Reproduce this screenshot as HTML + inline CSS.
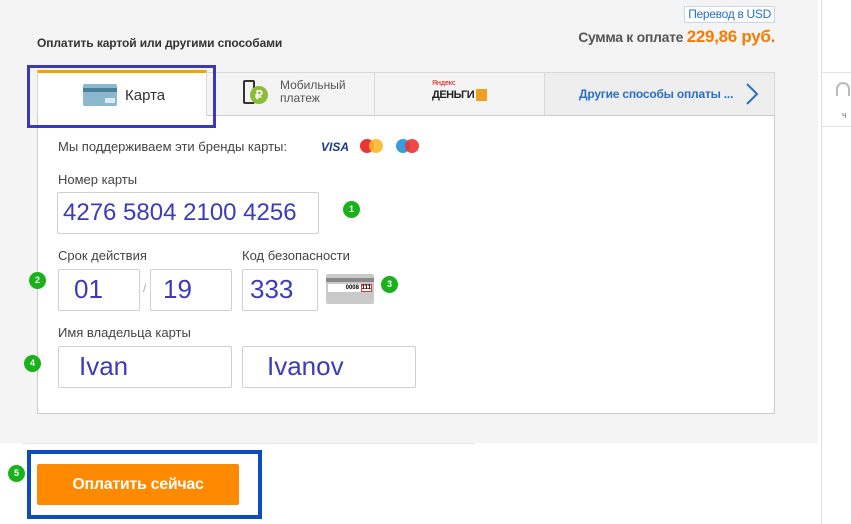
<!DOCTYPE html>
<html><head><meta charset="utf-8"><style>
*{margin:0;padding:0;box-sizing:border-box}
body{width:851px;height:524px;position:relative;background:#fff;font-family:"Liberation Sans",Arial,sans-serif;overflow:hidden}
.a{position:absolute}
.panel{left:0;top:0;width:818px;height:443px;background:#f4f4f4}
.inp{position:absolute;background:#fff;border:1px solid #d0d0d0;border-radius:2px;color:#3c3cb8;font-size:26px;line-height:39px;white-space:nowrap}
.lbl{position:absolute;font-size:13px;color:#444}
.b{position:absolute;width:17px;height:17px;border-radius:50%;background:#19b21b;color:#fff;font-size:9px;font-weight:bold;text-align:center;line-height:17px}
.tab{position:absolute;top:72px;height:43px;border-top:1px solid #d8d8d8;border-right:1px solid #d8d8d8;background:#f4f4f4}
</style></head><body>
<div class="a panel"></div>
<div class="a" style="left:821px;top:0;width:1px;height:524px;background:#e2e2e2"></div>
<div class="a" style="left:822px;top:72px;width:29px;height:1px;background:#e2e2e2"></div>
<div class="a" style="left:822px;top:126px;width:29px;height:1px;background:#e2e2e2"></div>
<div class="a" style="left:836px;top:82px;width:14px;height:14px;border:2px solid #bbb;border-bottom:none;border-radius:8px 8px 0 0"></div>
<div class="a" style="left:842px;top:110px;font-size:9px;color:#777">ч</div>

<div class="a" style="right:76px;top:6px;border:1px solid #c8d8ea;background:#fff;color:#2a6fc1;font-size:12px;padding:0 3px;line-height:15px;letter-spacing:-0.3px">Перевод в USD</div>
<div class="a" style="left:37px;top:36px;font-size:12px;font-weight:bold;color:#333;letter-spacing:-0.1px">Оплатить картой или другими способами</div>
<div class="a" style="right:76px;top:27px;font-size:14px;font-weight:bold;color:#555;letter-spacing:-0.3px">Сумма к оплате <span style="color:#f57c00;font-size:17px">229,86 руб.</span></div>

<div class="a" style="left:37px;top:115px;width:738px;height:299px;background:#fff;border:1px solid #ccc"></div>
<div class="tab" style="left:207px;width:168px"></div>
<div class="tab" style="left:375px;width:170px"></div>
<div class="tab" style="left:545px;width:230px;background:#eeeeee"></div>
<div class="a" style="left:37px;top:70px;width:170px;height:46px;background:#fff;border-top:3px solid #f5a300;border-left:1px solid #d8d8d8;border-right:1px solid #d8d8d8"></div>
<div class="a" style="left:83px;top:84px;width:34px;height:22px;background:#8ab9cf;border-radius:2px"></div>
<div class="a" style="left:83px;top:88px;width:34px;height:4px;background:#4b7f98"></div>
<div class="a" style="left:105px;top:98px;width:10px;height:5px;background:#d9eaf2"></div>
<div class="a" style="left:125px;top:87px;font-size:15px;color:#333">Карта</div>
<div class="a" style="left:243px;top:80px;width:12px;height:24px;border:2px solid #333;border-radius:2px"></div>
<div class="a" style="left:250px;top:86px;width:18px;height:18px;border-radius:50%;background:#8dbb3a;color:#fff;font-size:12px;font-weight:bold;text-align:center;line-height:18px">₽</div>
<div class="a" style="left:280px;top:79px;font-size:12px;color:#555;line-height:13px">Мобильный<br>платеж</div>
<div class="a" style="left:432px;top:80px;font-size:7px;color:#d00">Яндекс</div>
<div class="a" style="left:432px;top:89px;font-size:11px;font-weight:bold;color:#222;letter-spacing:-0.5px">ДЕНЬГИ</div>
<div class="a" style="left:476px;top:89px;width:11px;height:12px;background:#f0a020"></div>
<div class="a" style="left:579px;top:87px;font-size:12px;font-weight:bold;color:#2a6fc1;letter-spacing:-0.2px">Другие способы оплаты ...</div>
<svg class="a" style="left:744px;top:82px" width="16" height="24"><path d="M3 2 L13 12 L3 22" stroke="#2a6fc1" stroke-width="2" fill="none"/></svg>
<div class="a" style="left:27px;top:65px;width:189px;height:63px;border:3px solid #3a3ab8"></div>

<div class="lbl" style="left:58px;top:139px">Мы поддерживаем эти бренды карты:</div>
<div class="a" style="left:321px;top:140px;font-size:12px;font-weight:bold;font-style:italic;color:#1a3b8a">VISA</div>
<div class="a" style="left:360px;top:139px;width:14px;height:14px;border-radius:50%;background:#e33"></div>
<div class="a" style="left:369px;top:139px;width:14px;height:14px;border-radius:50%;background:#f8b82a;opacity:.9"></div>
<div class="a" style="left:396px;top:139px;width:14px;height:14px;border-radius:50%;background:#3a9be0"></div>
<div class="a" style="left:405px;top:139px;width:14px;height:14px;border-radius:50%;background:#e33;opacity:.9"></div>

<div class="lbl" style="left:58px;top:172px">Номер карты</div>
<div class="inp" style="left:57px;top:192px;width:262px;height:42px;padding-left:5px;font-size:24px">4276 5804 2100 4256</div>
<div class="b" style="left:343px;top:201px">1</div>

<div class="lbl" style="left:58px;top:248px">Срок действия</div>
<div class="lbl" style="left:242px;top:248px">Код безопасности</div>
<div class="inp" style="left:58px;top:269px;width:82px;height:42px;padding-left:15px">01</div>
<div class="a" style="left:143px;top:283px;font-size:11px;color:#aaa">/</div>
<div class="inp" style="left:150px;top:269px;width:82px;height:42px;padding-left:12px">19</div>
<div class="inp" style="left:242px;top:269px;width:76px;height:42px;padding-left:7px">333</div>
<div class="a" style="left:326px;top:274px;width:48px;height:30px;background:#c9c9c9;border-radius:2px"></div>
<div class="a" style="left:326px;top:278px;width:48px;height:4px;background:#888"></div>
<div class="a" style="left:328px;top:284px;width:44px;height:8px;background:#fff;font-size:6px;text-align:right;line-height:8px;color:#000;font-weight:bold">0008 <span style="border:1px solid #d33">111</span></div>
<div class="b" style="left:381px;top:276px">3</div>
<div class="b" style="left:29px;top:272px">2</div>

<div class="lbl" style="left:58px;top:325px">Имя владельца карты</div>
<div class="inp" style="left:58px;top:346px;width:174px;height:42px;padding-left:20px">Ivan</div>
<div class="inp" style="left:242px;top:346px;width:174px;height:42px;padding-left:24px">Ivanov</div>
<div class="b" style="left:24px;top:355px">4</div>

<div class="a" style="left:22px;top:443px;width:453px;height:1px;background:#e8e8e8"></div>
<div class="a" style="left:27px;top:450px;width:235px;height:69px;border:4px solid #0b4eb5"></div>
<div class="a" style="left:37px;top:464px;width:202px;height:41px;background:#ff8a00;border-radius:2px;color:#fff;font-size:16px;font-weight:bold;text-align:center;line-height:41px;letter-spacing:-0.3px">Оплатить сейчас</div>
<div class="b" style="left:8px;top:465px">5</div>
</body></html>
